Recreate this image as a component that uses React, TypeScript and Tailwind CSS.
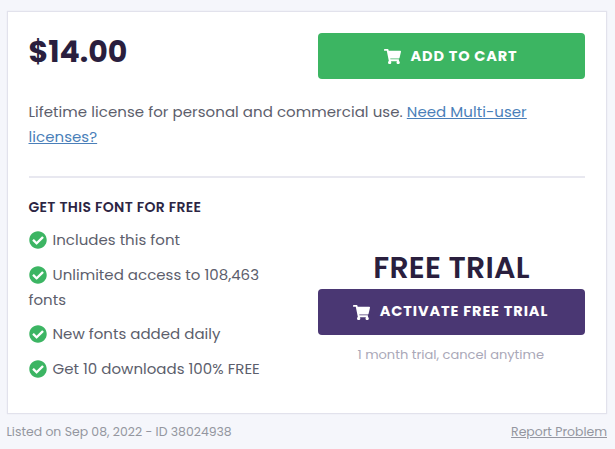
import type { ReactNode } from "react";
import { FaCheckCircle, FaShoppingCart } from "react-icons/fa";

function Feature({ children }: { children: ReactNode }) {
  return (
    <li className="mb-[10px] leading-[24.8px] tracking-[0.02px]">
      <FaCheckCircle className="mr-[6px] inline-block size-[18px] align-[-4px] text-[#3cb563]" />
      {children}
    </li>
  );
}

export default function App() {
  return (
    <div className="h-[449px] w-[615px] overflow-hidden bg-[#f5f6fb] pt-[11px] pr-2 pl-[7px] font-['Poppins','Inter',sans-serif] text-[15px] text-[#5c5e6c]">
      <main className="h-[403px] border border-[#e2e2ec] bg-white pt-[21px] pr-[21px] pl-[20.5px] shadow-[0_0_1px_#e2e2ec]">
        <div className="flex h-[46px] items-start justify-between">
          <div className="pt-[1px] text-[30px] leading-[36px] font-bold tracking-[0px] text-[#2a1f3e]">$14.00</div>
          <button className="flex h-[46px] w-[267px] items-center justify-center rounded bg-[#3cb562] pr-[1.5px] text-[14.5px] font-bold tracking-[0.85px] text-white">
            <FaShoppingCart className="mr-[9.5px] size-[17px]" />
            <span className="pt-px">ADD TO CART</span>
          </button>
        </div>
        <p className="mt-[21px] h-[49px] leading-[24.5px] tracking-[0.05px] whitespace-nowrap">
          Lifetime license for personal and commercial use.{" "}
          <a className="text-[#4a7fb9] underline">Need Multi-user<br />licenses?</a>
        </p>
        <hr className="mt-[27px] border-t-2 border-[#e8e8f0]" />
        <div className="flex justify-between">
          <section>
            <h2 className="mt-[17px] mb-[8px] text-[14px] leading-[25px] font-semibold tracking-[0.33px] text-[#2c2543]">GET THIS FONT FOR FREE</h2>
            <ul className="whitespace-nowrap">
              <Feature>Includes this font</Feature>
              <Feature>Unlimited access to 108,463<br />fonts</Feature>
              <Feature>New fonts added daily</Feature>
              <Feature>Get 10 downloads 100% FREE</Feature>
            </ul>
          </section>
          <section className="flex w-[267px] flex-col items-center pt-[70px]">
            <h3 className="h-[41px] text-[30px] leading-[39px] font-semibold tracking-[0.2px] whitespace-nowrap text-[#2a1f3e]">FREE TRIAL</h3>
            <button className="flex h-[46px] w-[267px] items-center justify-center rounded bg-[#4a3773] pr-[1.5px] text-[14.5px] font-bold tracking-[0.9px] whitespace-nowrap text-white">
              <FaShoppingCart className="mr-[9.5px] size-[17px]" />
              ACTIVATE FREE TRIAL
            </button>
            <p className="mt-[10px] -ml-[1.5px] text-[13px] leading-5 text-[#aaa8b8]">1 month trial, cancel anytime</p>
          </section>
        </div>
      </main>
      <footer className="-ml-[0.5px] flex justify-between pt-[8px] text-[12.45px] leading-5 text-[#9496a0]">
        <span>Listed on Sep 08, 2022 - ID 38024938</span>
        <a className="underline">Report Problem</a>
      </footer>
    </div>
  );
}
